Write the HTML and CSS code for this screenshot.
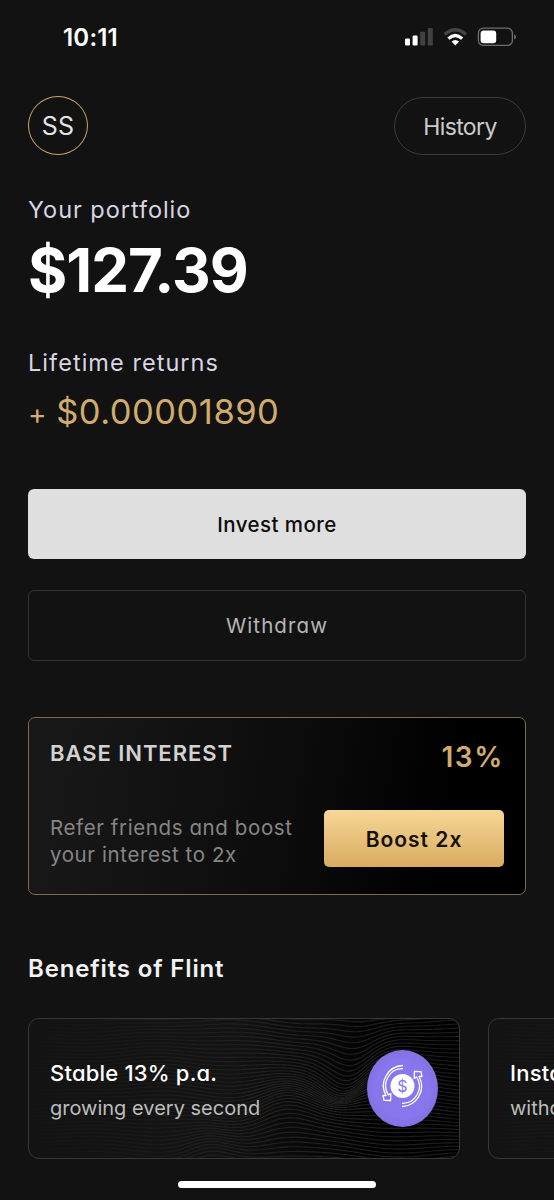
FILE: index.html
```
<!DOCTYPE html>
<html lang="en">
<head>
<meta charset="utf-8">
<title>Portfolio</title>
<link rel="stylesheet" href="styles.css">
</head>
<body>
<div class="screen">
  <div class="status">
    <span class="time">10:11</span>
    <svg class="status-icons" width="112" height="20" viewBox="0 0 112 20">
      <g fill="#fff"><rect x="0" y="10.5" width="5" height="7" rx="1.3"/><rect x="7.6" y="7.5" width="5" height="10" rx="1.3"/></g>
      <g fill="#414141"><rect x="15.2" y="3.7" width="5" height="13.8" rx="1.3"/><rect x="22.8" y="0" width="5" height="17.5" rx="1.3"/></g>
      <g fill="none" stroke-width="3.3">
        <path d="M39.6 6.6 Q50.3 -3 61 6.6" stroke="#454545"/>
        <path d="M43.4 10.6 Q50.3 4.3 57.2 10.6" stroke="#fff"/>
      </g>
      <path d="M46.5 13.5 Q50.3 10.4 54.1 13.5 L50.3 17.6Z" fill="#fff"/>
      <rect x="73.4" y=".2" width="34" height="17.2" rx="5" fill="none" stroke="#6d6d6d" stroke-width="1.3"/>
      <rect x="75.6" y="2.4" width="15.6" height="12.8" rx="3" fill="#fff"/>
      <path d="M109.2 6.2 Q112.8 8.8 109.2 11.4Z" fill="#777"/>
    </svg>
  </div>

  <header class="topbar">
    <div class="avatar">SS</div>
    <button class="history">History</button>
  </header>

  <section class="summary">
    <div class="label portfolio-label">Your portfolio</div>
    <div class="balance">$127.39</div>
    <div class="label returns-label">Lifetime returns</div>
    <div class="returns"><span class="plus">+</span> $0.00001890</div>
  </section>

  <div class="actions">
    <button class="action invest">Invest more</button>
    <button class="action withdraw">Withdraw</button>
  </div>

  <section class="boost-card">
    <div class="boost-info">
      <h2 class="boost-title">BASE INTEREST</h2>
      <p class="boost-text">Refer friends and boost<br>your interest to 2x</p>
    </div>
    <div class="boost-side">
      <span class="rate">13%</span>
      <button class="boost-button">Boost 2x</button>
    </div>
  </section>

  <h2 class="benefits-title">Benefits of Flint</h2>
  <div class="benefits">
    <article class="benefit">
      <svg class="waves" width="432" height="141"></svg>
      <div class="benefit-copy">
        <h3 class="benefit-title">Stable 13% p.a.</h3>
        <p class="benefit-text">growing every second</p>
      </div>
      <svg class="badge" width="71" height="77" viewBox="0 0 71 77">
        <defs><radialGradient id="violet"><stop offset=".75" stop-color="#8876ed"/><stop offset="1" stop-color="#8272e2"/></radialGradient></defs>
        <ellipse cx="35.5" cy="38.5" rx="35.5" ry="38.5" fill="url(#violet)"/>
        <circle cx="35.5" cy="36" r="12" fill="#fff"/>
        <g fill="none" stroke="#fff" stroke-width="1.3" stroke-linejoin="round">
          <path d="M36 15.5 A20.2 20.2 0 0 0 19 45.5 L16 45.5 L17 50.3 L23.6 50.5 L23.8 43.6 L21.4 45 A17 17 0 0 1 36 18.7"/>
          <path d="M35 56.5 A20.2 20.2 0 0 0 52 26.5 L55 26.5 L54 21.7 L47.4 21.5 L47.2 28.4 L49.6 27 A17 17 0 0 1 35 53.3"/>
        </g>
        <text x="35.5" y="41.6" text-anchor="middle" class="coin">$</text>
      </svg>
    </article>
    <article class="benefit">
      <svg class="waves" width="432" height="141"></svg>
      <div class="benefit-copy">
        <h3 class="benefit-title">Instant</h3>
        <p class="benefit-text">withdrawals</p>
      </div>
    </article>
  </div>
  <div class="home-indicator"></div>
</div>
<script src="waves.js"></script>
</body>
</html>
```
FILE: styles.css
```
* { box-sizing: border-box; margin: 0; padding: 0; }
html, body { background: #121212; }
body { width: 554px; height: 1200px; overflow: hidden; }
button { display: block; border: 0; background: none; font: inherit; color: inherit; }
h2, h3 { font-weight: inherit; }

.screen {
  display: flex;
  flex-direction: column;
  width: 554px;
  height: 1200px;
  padding: 0 28px;
  overflow: hidden;
  font-family: Inter, "Liberation Sans", sans-serif;
  font-feature-settings: "cv11" 1;
  color: #fff;
  white-space: nowrap;
}

.status {
  display: flex;
  justify-content: space-between;
  height: 96px;
  padding: 28px 9px 0 35px;
}
.time { font-size: 24px; line-height: 19px; font-weight: 600; letter-spacing: .2px; }
.status-icons { overflow: visible; }

.topbar { display: flex; justify-content: space-between; height: 92px; font-feature-settings: normal; }
.avatar {
  width: 60px;
  height: 59px;
  border: 1.5px solid #c8a568;
  border-radius: 50%;
  color: #e4e4e4;
  font-size: 25px;
  line-height: 58px;
  text-align: center;
  letter-spacing: .2px;
}
.history {
  width: 132px;
  height: 58px;
  margin-top: 1px;
  border: 1px solid #3b3b3b;
  border-radius: 29px;
  color: #ccc;
  font-size: 23px;
  line-height: 58px;
  letter-spacing: -.6px;
}

.summary { height: 301px; }
.label { font-size: 23.5px; line-height: 30px; color: #d9d5e3; }
.portfolio-label { padding-top: 7px; letter-spacing: .95px; }
.balance { margin-top: 10px; font-size: 60px; line-height: 70px; font-weight: 700; letter-spacing: -1px; }
.returns-label { margin-top: 43px; letter-spacing: 1.05px; }
.returns { margin-top: 14px; font-size: 34.5px; line-height: 40px; letter-spacing: .5px; word-spacing: -1px; color: #d1ac6c; }
.plus { display: inline-block; width: 19px; font-size: 28px; }

.actions { display: flex; flex-direction: column; gap: 31px; height: 228px; }
.action { height: 70px; border-radius: 6px; font-size: 20.5px; line-height: 71px; text-align: center; }
.invest { background: #dfdfdf; color: #0b0b0b; font-weight: 500; letter-spacing: .45px; }
.withdraw { height: 71px; border: 1px solid #343434; color: #b6b6b6; line-height: 69px; letter-spacing: 1.1px; }

.boost-card {
  display: flex;
  justify-content: space-between;
  height: 178px;
  padding: 0 21px;
  border: 1px solid #7c6b48;
  border-radius: 7px;
  background: linear-gradient(100deg, #171717 8%, #0c0c0c 52%, #000 82%);
}
.boost-title { padding-top: 20px; font-size: 22px; line-height: 30px; font-weight: 600; letter-spacing: .95px; color: #d2d2d2; }
.boost-text { margin-top: 46px; font-size: 20.5px; line-height: 27px; letter-spacing: .6px; color: #868686; }
.boost-side { display: flex; flex-direction: column; align-items: flex-end; }
.rate { padding-top: 24px; font-size: 28px; line-height: 30px; font-weight: 600; letter-spacing: 1.6px; color: #d0ac70; }
.boost-button {
  width: 180px;
  height: 57px;
  margin-top: 38px;
  border-radius: 5px;
  background: linear-gradient(#f7d797, #d8ab60);
  color: #15120b;
  font-size: 21px;
  line-height: 59px;
  font-weight: 600;
  letter-spacing: 1px;
}

.benefits-title { margin-top: 54px; font-size: 24px; line-height: 40px; font-weight: 600; letter-spacing: .85px; color: #f2f2f2; }
.benefits { display: flex; gap: 28px; height: 141px; margin-top: 29px; }
.benefit {
  display: flex;
  flex: 0 0 432px;
  align-items: center;
  justify-content: space-between;
  position: relative;
  height: 141px;
  padding: 0 21px;
  overflow: hidden;
  border: 1px solid #373737;
  border-radius: 11px;
  background: linear-gradient(100deg, #131313 45%, #000 82%);
}
.waves { position: absolute; left: 0; top: 0; }
.wave { fill: none; stroke: url(#wave-fade-0); stroke-width: 1.1; }
.benefit-copy, .badge { position: relative; }
.benefit-copy { padding-top: 3px; }
.benefit-title { font-size: 22px; line-height: 30px; font-weight: 500; letter-spacing: .2px; }
.benefit-text { margin-top: 5px; font-size: 20px; line-height: 30px; color: #bdbdbd; }
.coin { font-size: 16px; fill: #8876ed; }

.home-indicator { flex: none; align-self: center; width: 198px; height: 7px; margin-top: 22px; border-radius: 4px; background: #fff; }
```
FILE: waves.js
```
// Contour lines behind each benefit card, brightest toward the middle.
document.querySelectorAll('.waves').forEach((svg, n) => {
  let out = `<defs><linearGradient id="wave-fade-${n}" gradientUnits="userSpaceOnUse" x1="0" y1="0" x2="432" y2="0">
    <stop offset="0" stop-color="#141414"/><stop offset=".55" stop-color="#222"/><stop offset="1" stop-color="#1c1c1c"/></linearGradient></defs>`;
  const bump = (v, c, w) => Math.exp(-(((v - c) / w) ** 2));
  for (let y = -40; y < 190; y += 3.7) {
    let d = '';
    for (let x = 0; x <= 432; x += 4) {
      const dip = 24 * bump(x, 322 - (y - 30) * 0.3, 26) * bump(y, 42, 36);
      const rise = 13 * bump(x, 255, 32) * bump(y, 98, 34) + 9 * bump(x, 180, 28) * bump(y, 138, 30);
      const swell = 3 * Math.sin(x / 38 + y / 34) + 1.6 * Math.sin(x / 19 - y / 27);
      d += (x ? 'L' : 'M') + x + ' ' + (y + dip - rise + swell * Math.min(1, x / 150)).toFixed(1);
    }
    out += `<path class="wave" d="${d}"/>`;
  }
  svg.innerHTML = out;
});
```
